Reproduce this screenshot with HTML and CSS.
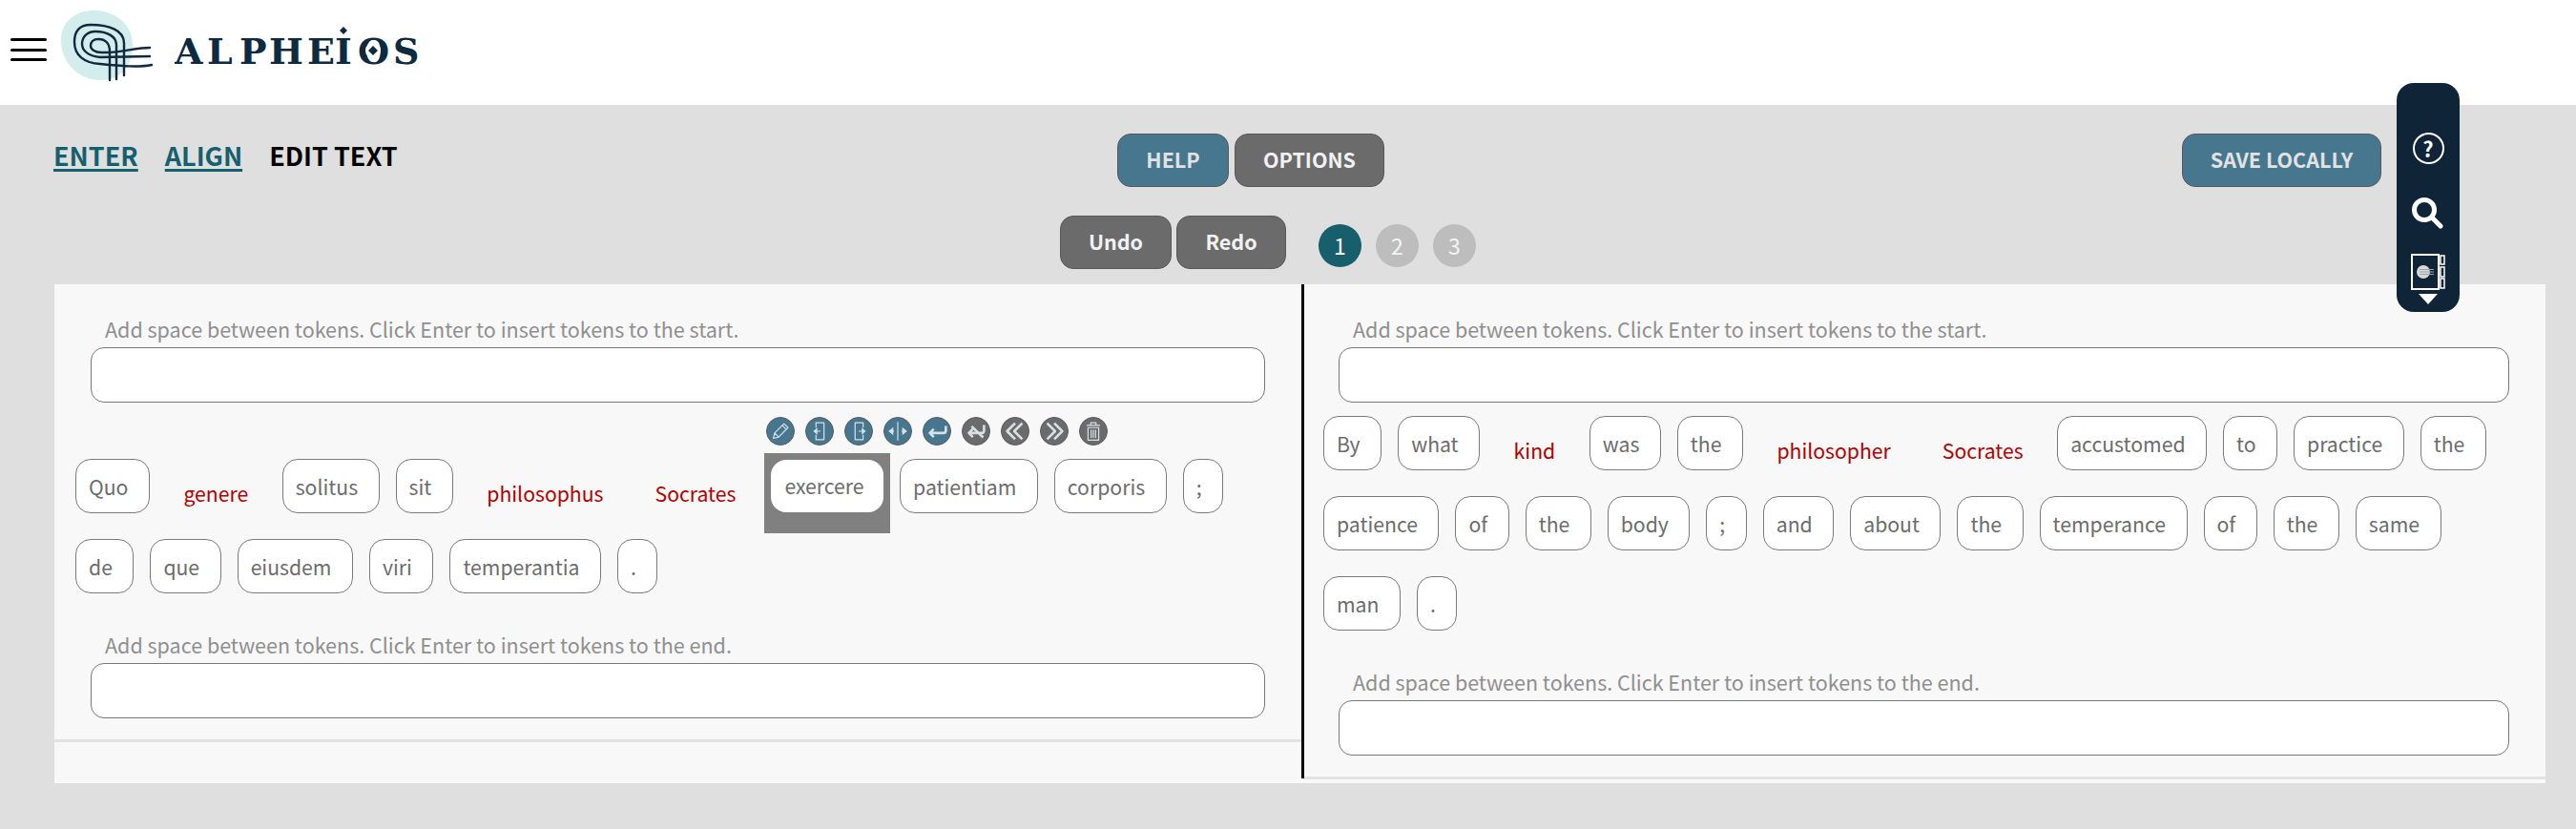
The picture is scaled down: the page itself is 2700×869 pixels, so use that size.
FILE: index.html
```html
<!DOCTYPE html>
<html lang="en">
<head>
<meta charset="utf-8">
<title>Alpheios</title>
<link rel="stylesheet" href="styles.css">
</head>
<body>
<header class="topbar">
  <button class="burger" aria-label="Menu"><span></span><span></span><span></span></button>
  <svg class="mark" viewBox="0 0 130 100" width="130" height="100" aria-hidden="true">
    <path class="blob" d="M14 44C13 24 28 11 48 11C70 11 88 24 89 46C90 66 78 84 56 84C32 84 15 66 14 44Z"/>
    <g class="swirl">
      <path d="M80 79V45C80 32 65 26 45 26C33 26 28 33 28 44C28 58 38 66 55 67C75 69 95 71 109 68"/>
      <path d="M72 83V47C72 38 62 33 50 33C41 33 36 39 36 46C36 54 44 59 55 60L107 59"/>
      <path d="M65 84V54C65 45 60 41 53 41C48 41 45 44 45 48C45 52 50 55 56 55H65C80 54 95 50 107 50"/>
    </g>
  </svg>
  <svg class="wordmark" viewBox="0 0 260 50" width="260" height="50" role="img" aria-label="Alpheios">
    <text x="0 34 68 99 139 168 192 229" y="41">ALPHEIOS</text>
    <path d="M177 2l4 4-4 4-4-4z"/>
    <ellipse class="hole" cx="208" cy="27" rx="8" ry="9"/>
    <path d="M208 22l5 5-5 5-5-5z"/>
  </svg>
</header>
<main class="page">
  <div class="row-top">
    <nav class="steps">
      <a class="step-link" href="#">ENTER</a>
      <a class="step-link" href="#">ALIGN</a>
      <span class="step-now">EDIT TEXT</span>
    </nav>
    <div class="btns">
      <button class="btn blue w-help">HELP</button>
      <button class="btn gray w-options">OPTIONS</button>
    </div>
    <button class="btn blue w-save">SAVE LOCALLY</button>
  </div>
  <div class="row-undo">
    <div class="btns small">
      <button class="btn gray w-undo">Undo</button>
      <button class="btn gray w-redo">Redo</button>
    </div>
    <div class="pages">
      <span class="page-dot on">1</span>
      <span class="page-dot">2</span>
      <span class="page-dot">3</span>
    </div>
  </div>

  <section class="panel">
    <div class="col col-left">
      <label class="hint">Add space between tokens. Click Enter to insert tokens to the start.</label>
      <div class="field"></div>
      <div class="tokens tokens-left">
        <div class="tok"><span>Quo</span></div>
        <div class="tok plain"><span>genere</span></div>
        <div class="tok"><span>solitus</span></div>
        <div class="tok"><span>sit</span></div>
        <div class="tok plain"><span>philosophus</span></div>
        <div class="tok plain"><span>Socrates</span></div>
        <div class="tok active">
          <div class="tools">
            <i class="tool b"><svg viewBox="0 0 30 30"><path d="M7 23l1.500-6L19 6.500l4.500 4.500L13 21.500zM17 8.500l4.500 4.500M8.500 17l4.500 4.500"/></svg></i>
            <i class="tool b"><svg viewBox="0 0 30 30"><path d="M11 11V5.500h9v19h-9V19M10 15h6"/><path class="solid" d="M8 15l4.500-4v8z"/></svg></i>
            <i class="tool b"><svg viewBox="0 0 30 30"><path d="M20 11V5.500h-9v19h9V19M15 15h6"/><path class="solid" d="M23 15l-4.500-4v8z"/></svg></i>
            <i class="tool b"><svg viewBox="0 0 30 30"><path d="M15 4.500v21M6 15h5M19 15h5"/><path class="solid" d="M4.500 15l5.500-4.500v9zM25.500 15L20 10.500v9z"/></svg></i>
            <i class="tool b"><svg viewBox="0 0 30 30"><path class="thick" d="M25 9v5.500a2.500 2.500 0 0 1-2.500 2.500H7M11.500 12.500L7 17l4.500 4.500"/></svg></i>
            <i class="tool g"><svg viewBox="0 0 30 30"><path class="thick" d="M24 8v6.500a2.500 2.500 0 0 1-2.500 2.500H7M11.500 12.500L7 17l4.500 4.500M10 9.500L23 22"/></svg></i>
            <i class="tool g"><svg viewBox="0 0 30 30"><path class="thick" d="M15 6l-9 9 9 9M23 6l-9 9 9 9"/></svg></i>
            <i class="tool g"><svg viewBox="0 0 30 30"><path class="thick" d="M7 6l9 9-9 9M15 6l9 9-9 9"/></svg></i>
            <i class="tool g"><svg viewBox="0 0 30 30"><path d="M7.500 8.500h15M12 8.500V5.500h6v3M9 11h12v14H9zM12.500 13.500v9M15 13.500v9M17.500 13.500v9"/></svg></i>
          </div>
          <span>exercere</span>
        </div>
        <div class="tok"><span>patientiam</span></div>
        <div class="tok"><span>corporis</span></div>
        <div class="tok"><span>;</span></div>
        <div class="tok"><span>de</span></div>
        <div class="tok"><span>que</span></div>
        <div class="tok"><span>eiusdem</span></div>
        <div class="tok"><span>viri</span></div>
        <div class="tok"><span>temperantia</span></div>
        <div class="tok"><span>.</span></div>
      </div>
      <label class="hint hint-end">Add space between tokens. Click Enter to insert tokens to the end.</label>
      <div class="field"></div>
      <hr class="rule">
    </div>
    <div class="col col-right">
      <label class="hint">Add space between tokens. Click Enter to insert tokens to the start.</label>
      <div class="field"></div>
      <div class="tokens">
        <div class="tok"><span>By</span></div>
        <div class="tok"><span>what</span></div>
        <div class="tok plain"><span>kind</span></div>
        <div class="tok"><span>was</span></div>
        <div class="tok"><span>the</span></div>
        <div class="tok plain"><span>philosopher</span></div>
        <div class="tok plain"><span>Socrates</span></div>
        <div class="tok"><span>accustomed</span></div>
        <div class="tok"><span>to</span></div>
        <div class="tok"><span>practice</span></div>
        <div class="tok"><span>the</span></div>
        <div class="tok"><span>patience</span></div>
        <div class="tok"><span>of</span></div>
        <div class="tok"><span>the</span></div>
        <div class="tok"><span>body</span></div>
        <div class="tok"><span>;</span></div>
        <div class="tok"><span>and</span></div>
        <div class="tok"><span>about</span></div>
        <div class="tok"><span>the</span></div>
        <div class="tok"><span>temperance</span></div>
        <div class="tok"><span>of</span></div>
        <div class="tok"><span>the</span></div>
        <div class="tok"><span>same</span></div>
        <div class="tok"><span>man</span></div>
        <div class="tok"><span>.</span></div>
      </div>
      <label class="hint hint-end">Add space between tokens. Click Enter to insert tokens to the end.</label>
      <div class="field"></div>
      <hr class="rule">
    </div>
  </section>
</main>

<aside class="dock">
  <div class="d-help">?</div>
  <svg class="d-search" viewBox="0 0 34 34" width="34" height="34"><circle cx="14" cy="14" r="10.500"/><path d="M22 22l9 9"/></svg>
  <svg class="d-book" viewBox="0 0 36 40" width="36" height="40">
    <rect x="1" y="1" width="28" height="36"/>
    <path class="tabs" d="M31 2h4v9h-4zM31 14h4v10h-4zM31 26h4v10h-4z"/>
    <circle class="seal" cx="13" cy="19" r="7"/>
    <path class="seal-l" d="M9 16.500h15M9 19h15M9 21.500h15"/>
  </svg>
  <svg class="d-arrow" viewBox="0 0 20 11" width="20" height="11"><path d="M0 0h20L10 11z"/></svg>
</aside>
</body>
</html>
```
FILE: styles.css
```css
* { box-sizing: border-box; }
html, body { margin: 0; padding: 0; }
body {
  width: 2700px;
  height: 869px;
  overflow: hidden;
  position: relative;
  background: #dfdfdf;
  font-family: "Noto Sans CJK SC", "Noto Sans", sans-serif;
}

/* top bar */
.topbar {
  height: 110px;
  background: #fff;
  display: flex;
  align-items: flex-start;
}
.burger {
  width: 38px;
  height: 24px;
  margin: 40px 1px 0 11px;
  padding: 0;
  border: 0;
  background: none;
  display: flex;
  flex-direction: column;
  justify-content: space-between;
}
.burger span { display: block; height: 3px; background: #000; border-radius: 2px; }
.mark { display: block; flex: none; }
.blob { fill: #d3ecec; }
.swirl path { fill: none; stroke: #10293f; stroke-width: 2.400; stroke-linecap: round; }
.wordmark { display: block; flex: none; margin: 26px 0 0 3px; }
.wordmark text { font-family: "DejaVu Serif", serif; font-weight: 700; font-size: 38px; fill: #0d2a40; }
.wordmark path { fill: #0d2a40; }
.wordmark .hole { fill: #fff; }

/* control rows */
.page { padding-top: 30px; }
.row-top { display: flex; height: 56px; padding-left: 56px; }
.steps {
  width: 1115px;
  display: flex;
  gap: 28px;
  padding-top: 3px;
  font-size: 27px;
  line-height: 40px;
  font-weight: 700;
}
.step-link { color: #15606e; text-decoration: underline; text-decoration-thickness: 3px; text-underline-offset: 3px; }
.step-now { color: #000; }
.btns { display: flex; gap: 6px; }
.btns.small { gap: 5px; }
.btn {
  height: 56px;
  padding: 0 0 3px;
  border: 1px solid #585858;
  border-radius: 14px;
  font: 700 21.500px/30px "Noto Sans CJK SC", "Noto Sans", sans-serif;
}
.btn.blue { background: #46778f; color: #e2e2e2; }
.btn.gray { background: #6b6b6b; color: #f2f2f2; }
.w-help { width: 117px; }
.w-options { width: 157px; }
.w-undo { width: 117px; }
.w-redo { width: 115px; }
.w-save { width: 209px; margin-left: 836px; }
.row-undo { display: flex; height: 56px; margin-top: 30px; padding-left: 1111px; }
.pages { display: flex; gap: 15px; margin: 9px 0 0 34px; }
.page-dot {
  width: 45px;
  height: 45px;
  border-radius: 50%;
  background: #bdbdbd;
  color: #f4f4f4;
  text-align: center;
  font-size: 23px;
  line-height: 45px;
}
.page-dot.on { background: #175f6c; color: #fff; }

/* panel */
.panel {
  display: flex;
  align-items: stretch;
  margin: 16px 32px 0 57px;
  height: 523px;
  padding-bottom: 5px;
  background: #f8f8f8;
}
.col { padding-top: 30px; }
.col-left { width: 1307px; padding-left: 0; }
.col-right { flex: 1; border-left: 3px solid #000; }
.hint {
  display: block;
  height: 36px;
  font-size: 21.500px;
  line-height: 34px;
  color: #8f8f8f;
  white-space: nowrap;
}
.col-left .hint { margin-left: 53px; }
.col-right .hint { margin-left: 51px; }
.hint-end { margin-top: 16px; }
.field {
  height: 58px;
  background: #fff;
  border: 1px solid #777;
  border-radius: 14px;
}
.col-left .field { margin: 0 38px; }
.col-right .field { margin: 0 38px 0 36px; }
.rule {
  height: 3px;
  margin: 22px 0 0;
  border: 0;
  background: #e2e2e2;
}

/* tokens */
.tokens { display: flex; flex-wrap: wrap; margin-top: 8px; padding: 0 26px 0 11.500px; }
.tokens-left { margin-top: 53px; padding-left: 13.500px; padding-right: 20px; }
.tok { height: 84px; padding: 6px 8.500px 21px; font-size: 21.200px; color: #6c6c6c; flex: none; }
.tok > span {
  display: block;
  height: 57px;
  padding: 0 21.500px 0 13px;
  background: #fff;
  border: 1px solid #7a7a7a;
  border-radius: 16px;
  line-height: 55px;
}
.tok.plain { padding: 6px 8.500px 21px; }
.tok.plain > span {
  padding: 7px 17.500px 0;
  background: none;
  border-color: transparent;
  color: #b30000;
}
.tok.active {
  position: relative;
  padding: 7px 7px 20px;
  margin: 0 2px 0 3px;
  background: #808080;
}
.tok.active > span { height: 55px; border: 0; padding: 0 20px 0 14px; line-height: 53px; }
.tools {
  position: absolute;
  left: 2px;
  top: -38px;
  display: flex;
  gap: 11px;
}
.tool {
  display: block;
  width: 30px;
  height: 30px;
  border-radius: 50%;
  border: 1px solid #5a5a5a;
}
.tool.b { background: #46778f; }
.tool.g { background: #6b6b6b; }
.tool svg { display: block; width: 28px; height: 28px; }
.tool path { fill: none; stroke: #d8e0e4; stroke-width: 1.300; stroke-linejoin: round; }
.tool path.solid { fill: #d8e0e4; stroke: none; }
.tool path.thick { stroke-width: 2.800; }

/* floating dock */
.dock {
  position: absolute;
  left: 2512px;
  top: 87px;
  width: 66px;
  height: 240px;
  background: #0f2437;
  border-radius: 18px;
  display: flex;
  flex-direction: column;
  align-items: center;
}
.d-help {
  width: 33px;
  height: 33px;
  margin-top: 52px;
  border: 2px solid #fff;
  border-radius: 50%;
  color: #fff;
  font-size: 22px;
  font-weight: 700;
  line-height: 28px;
  text-align: center;
}
.d-search { margin: 34px 0 0 -2px; }
.d-search circle, .d-search path { fill: none; stroke: #fff; stroke-width: 5px; stroke-linecap: round; }
.d-book { margin-top: 26px; }
.d-book rect { fill: none; stroke: #fff; stroke-width: 2; }
.d-book .tabs { fill: none; stroke: #fff; stroke-width: 1.500; }
.d-book .seal { fill: #d8d8d8; }
.d-book .seal-l { stroke: #9aa6ae; stroke-width: 1; }
.d-arrow { margin-top: 2px; }
.d-arrow path { fill: #fff; }
```
